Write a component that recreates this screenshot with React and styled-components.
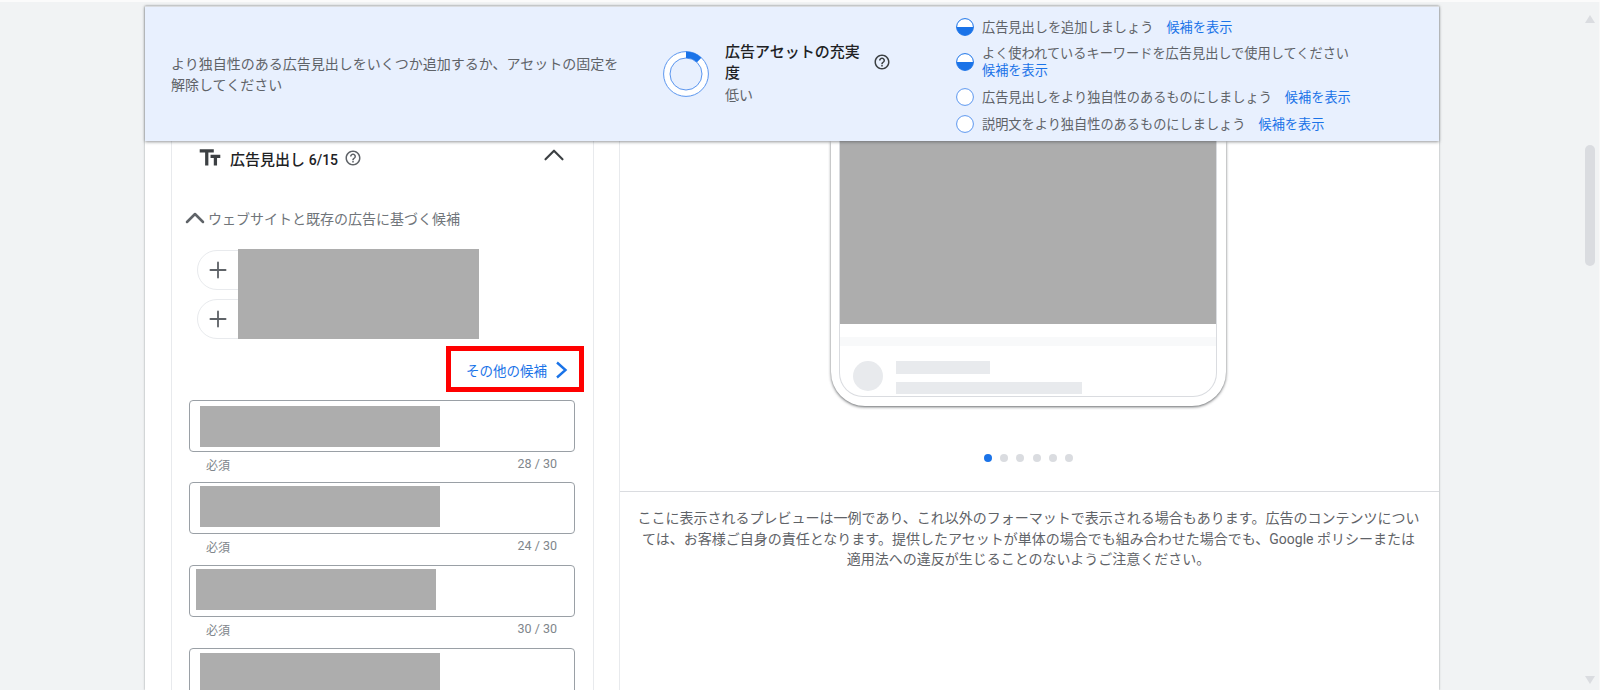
import React from "react";
import styled, { createGlobalStyle } from "styled-components";
import { Plus, ChevronUp } from "lucide-react";
import { MdTextFields, MdHelpOutline } from "react-icons/md";

const tips = [
  { id: 1, state: "half", text: "広告見出しを追加しましょう" },
  { id: 2, state: "half", text: "よく使われているキーワードを広告見出しで使用してください", wrap: true },
  { id: 3, state: "empty", text: "広告見出しをより独自性のあるものにしましょう" },
  { id: 4, state: "empty", text: "説明文をより独自性のあるものにしましょう" },
];

const fields = [
  { id: 1, count: "28 / 30", left: 10, lift: 0, height: 81.5 },
  { id: 2, count: "24 / 30", left: 10, lift: 2, height: 83.5 },
  { id: 3, count: "30 / 30", left: 6, lift: 4, height: 82.5 },
  { id: 4, left: 10, lift: 0, height: 82.5 },
];

const dots = [0, 1, 2, 3, 4, 5];

const Gauge = () => (
  <svg width="46" height="46" viewBox="0 0 46 46" style={{ flexShrink: 0 }}>
    <circle cx="23" cy="23" r="19.25" fill="none" stroke="#fff" strokeWidth="6" />
    <circle cx="23" cy="23" r="22.4" fill="none" stroke="#5c97ef" strokeWidth="1" />
    <circle cx="23" cy="23" r="16" fill="none" stroke="#5c97ef" strokeWidth="1" />
    <path d="M23 3.75 A19.25 19.25 0 0 1 36.2 9" fill="none" stroke="#1a73e8" strokeWidth="6.4" />
  </svg>
);

const TipIcon = ({ state }) => (
  <svg width="18" height="18" viewBox="0 0 18 18" style={{ flexShrink: 0 }}>
    <circle cx="9" cy="9" r="8.4" fill="#fff" stroke={state === "half" ? "#1a73e8" : "#5c97ef"} strokeWidth="1" />
    {state === "half" && <path d="M.6 9 a8.4 8.4 0 0 0 16.8 0z" fill="#1a73e8" />}
  </svg>
);

const App = () => {
  return (
    <Page>
      <GlobalStyle />
      <Main>
        <Card>
          <Banner>
            <BannerText>
              より独自性のある広告見出しをいくつか追加するか、アセットの固定を解除してください
            </BannerText>
            <Strength>
              <Gauge />
              <StrengthText>
                <StrengthTitle>広告アセットの充実度</StrengthTitle>
                <StrengthValue>低い</StrengthValue>
              </StrengthText>
              <BannerHelp>
                <MdHelpOutline size={18} />
              </BannerHelp>
            </Strength>
            <Tips>
              {tips.map((t) => (
                <Tip key={t.id}>
                  <TipIcon state={t.state} />
                  <TipBody $wrap={t.wrap}>
                    <span>{t.text}</span>
                    <LinkText>候補を表示</LinkText>
                  </TipBody>
                </Tip>
              ))}
            </Tips>
          </Banner>
          <Body>
            <LeftCol>
              <Panel>
                <PanelHead>
                  <MdTextFields size={26} color="#3c4043" />
                  <PanelTitle>
                    広告見出し <small>6/15</small>
                  </PanelTitle>
                  <MdHelpOutline size={18} color="#5f6368" />
                  <HeadChevron>
                    <ChevronUp size={34} strokeWidth={1.5} color="#3c4043" />
                  </HeadChevron>
                </PanelHead>
                <SuggestHead>
                  <ChevronUp size={32} strokeWidth={1.9} color="#5f6368" />
                  <span>ウェブサイトと既存の広告に基づく候補</span>
                </SuggestHead>
                <Chips>
                  <Chip>
                    <Plus size={26} strokeWidth={1.7} color="#5f6368" />
                  </Chip>
                  <Chip>
                    <Plus size={26} strokeWidth={1.7} color="#5f6368" />
                  </Chip>
                  <ChipMask />
                </Chips>
                <MoreBox>
                  <LinkText>その他の候補</LinkText>
                  <svg width="13" height="18" viewBox="0 0 13 18">
                    <path d="M2 1.5 L10.5 9 L2 16.5" fill="none" stroke="#1a73e8" strokeWidth="2.4" />
                  </svg>
                </MoreBox>
                {fields.map((f) => (
                  <Field key={f.id} $h={f.height}>
                    <FieldInput>
                      <Mask $left={f.left} $lift={f.lift} />
                    </FieldInput>
                    {f.count && (
                      <Helper>
                        <span>必須</span>
                        <Count>{f.count}</Count>
                      </Helper>
                    )}
                  </Field>
                ))}
              </Panel>
            </LeftCol>
            <RightCol>
              <Preview>
                <Phone>
                  <Screen>
                    <ScreenImage />
                    <ScreenBand />
                    <AdRow>
                      <Avatar />
                      <AdLines>
                        <AdLine $w={94} $h={13} />
                        <AdLine $w={186} $h={12} />
                      </AdLines>
                    </AdRow>
                  </Screen>
                </Phone>
                <Dots>
                  {dots.map((d) => (
                    <Dot key={d} $active={d === 0} />
                  ))}
                </Dots>
              </Preview>
              <Notice>
                ここに表示されるプレビューは一例であり、これ以外のフォーマットで表示される場合もあります。広告のコンテンツについ
                <br />
                ては、お客様ご自身の責任となります。提供したアセットが単体の場合でも組み合わせた場合でも、Google ポリシーまたは
                <br />
                適用法への違反が生じることのないようご注意ください。
              </Notice>
            </RightCol>
          </Body>
        </Card>
      </Main>
      <Rail>
        <ArrowUp />
        <Thumb />
        <ArrowDown />
      </Rail>
    </Page>
  );
};

export default App;

const GlobalStyle = createGlobalStyle`
  html, body {
    margin: 0;
    height: 690px;
    overflow: hidden;
    background: #f1f3f4;
  }
  * {
    box-sizing: border-box;
  }
`;

const Page = styled.div`
  display: flex;
  height: 690px;
  overflow: hidden;
  background: #f1f3f4;
  border-top: 2px solid #fbfbfb;
  font-family: Roboto, "Noto Sans CJK JP", sans-serif;
  color: #5f6368;
`;

const Main = styled.div`
  width: 1440px;
  padding: 4px 0 0 145px;
`;

const Card = styled.div`
  display: flex;
  flex-direction: column;
  width: 1294px;
  height: 684px;
  background: #fff;
  box-shadow: 0 0 2px rgba(60, 64, 67, 0.5);
`;

const Banner = styled.div`
  display: grid;
  grid-template-columns: 450px 303px 1fr;
  align-items: center;
  height: 135px;
  padding-left: 26px;
  background: #e8f0fe;
  border-top: 1px solid #dadce0;
  box-shadow: 0 1px 3px rgba(60, 64, 67, 0.55);
  position: relative;
  z-index: 1;
`;

const BannerText = styled.div`
  padding-top: 2px;
  font-size: 14px;
  line-height: 21px;
`;

const Strength = styled.div`
  display: flex;
  align-items: center;
  padding-left: 42px;
`;

const StrengthText = styled.div`
  width: 148px;
  margin-left: 16px;
`;

const StrengthTitle = styled.div`
  font-size: 15px;
  font-weight: 500;
  line-height: 21px;
  color: #202124;
`;

const StrengthValue = styled.div`
  font-size: 14px;
  line-height: 22px;
`;

const BannerHelp = styled.div`
  display: flex;
  margin: -24px 0 0 0;
  color: #3c4043;
`;

const Tips = styled.div`
  display: flex;
  flex-direction: column;
  gap: 9px;
  align-self: start;
  padding: 11px 0 0 32px;
`;

const Tip = styled.div`
  display: flex;
  align-items: center;
  gap: 8px;
`;

const TipBody = styled.div`
  display: flex;
  flex-direction: ${(p) => (p.$wrap ? "column" : "row")};
  gap: ${(p) => (p.$wrap ? "0" : "13px")};
  font-size: 13.2px;
  line-height: 17px;
`;

const LinkText = styled.span`
  color: #1a73e8;
`;

const Body = styled.div`
  flex: 1;
  display: grid;
  grid-template-columns: 474px 1fr;
  min-height: 0;
  overflow: hidden;
`;

const LeftCol = styled.div`
  padding-left: 26px;
`;

const Panel = styled.div`
  width: 423px;
  height: 100%;
  padding: 0 17px;
  border-left: 1.5px solid #e8eaed;
  border-right: 1.5px solid #e8eaed;
`;

const PanelHead = styled.div`
  display: flex;
  align-items: center;
  height: 34px;
  margin-left: 8px;
`;

const PanelTitle = styled.div`
  margin: 0 6px 0 7px;
  font-size: 15px;
  font-weight: 500;
  color: #202124;

  & > small {
    font-size: 14px;
  }
`;

const HeadChevron = styled.div`
  display: flex;
  margin-left: auto;
  margin-right: 5px;
  margin-top: -6px;
`;

const SuggestHead = styled.div`
  display: flex;
  align-items: center;
  height: 34px;
  margin: 26px 0 0 -10px;
  font-size: 14px;
  color: #70757a;

  & > svg {
    margin-right: -3px;
  }
`;

const Chips = styled.div`
  display: flex;
  flex-direction: column;
  gap: 9px;
  margin: 15px 0 0 8px;
  position: relative;
`;

const Chip = styled.div`
  display: flex;
  align-items: center;
  width: 282px;
  height: 40px;
  padding-left: 7px;
  border: 1px solid #e8eaed;
  border-radius: 20px;
`;

const ChipMask = styled.div`
  position: absolute;
  left: 41px;
  top: -1px;
  width: 241px;
  height: 90px;
  background: #adadad;
`;

const MoreBox = styled.div`
  display: flex;
  align-items: center;
  gap: 8px;
  width: 138px;
  height: 46px;
  margin: 7px -8px 8px auto;
  padding: 2px 0 0 15px;
  border: 5px solid #ff0000;
  font-size: 13.5px;
`;

const Field = styled.div`
  height: ${(p) => p.$h}px;
`;

const FieldInput = styled.div`
  display: flex;
  align-items: center;
  height: 52px;
  width: 386px;
  border: 1px solid #9aa0a6;
  border-radius: 4px;
`;

const Mask = styled.div`
  width: 240px;
  height: 41px;
  margin-left: ${(p) => p.$left}px;
  margin-bottom: ${(p) => p.$lift}px;
  background: #adadad;
`;

const Helper = styled.div`
  display: flex;
  justify-content: space-between;
  align-items: flex-start;
  width: 368px;
  padding: 3px 0 0 17px;
  font-size: 12px;
  line-height: 18px;
  color: #80868b;

  & > span:first-child {
    margin-top: 2px;
  }
`;

const Count = styled.span`
  font-size: 12.5px;
`;

const RightCol = styled.div`
  display: flex;
  flex-direction: column;
  border-left: 1.5px solid #e8eaed;
`;

const Preview = styled.div`
  height: 351px;
  padding-right: 2px;
  border-bottom: 1px solid #dadce0;
`;

const Phone = styled.div`
  width: 395px;
  height: 265px;
  margin: 0 auto;
  padding: 0 9px 9px 8px;
  background: #fff;
  border-radius: 0 0 34px 34px;
  box-shadow: 0 1px 3px rgba(60, 64, 67, 0.8);
`;

const Screen = styled.div`
  height: 100%;
  overflow: hidden;
  border: 1px solid #dadce0;
  border-top: none;
  border-radius: 0 0 24px 24px;
`;

const ScreenImage = styled.div`
  height: 183px;
  background: #adadad;
`;

const ScreenBand = styled.div`
  height: 9px;
  margin-top: 13px;
  background: #f8f9fa;
`;

const AdRow = styled.div`
  display: flex;
  gap: 13px;
  padding: 15px 0 0 13px;
`;

const Avatar = styled.div`
  width: 30px;
  height: 30px;
  border-radius: 50%;
  background: #e8eaed;
`;

const AdLines = styled.div`
  display: flex;
  flex-direction: column;
  gap: 8px;
`;

const AdLine = styled.div`
  width: ${(p) => p.$w}px;
  height: ${(p) => p.$h}px;
  background: #e8eaed;
`;

const Dots = styled.div`
  display: flex;
  justify-content: center;
  gap: 8.4px;
  margin-top: 48px;
`;

const Dot = styled.div`
  width: 8px;
  height: 8px;
  border-radius: 50%;
  background: ${(p) => (p.$active ? "#1a73e8" : "#dadce0")};
`;

const Notice = styled.div`
  padding: 16px 2px 0 0;
  font-size: 14px;
  line-height: 20.5px;
  text-align: center;
`;

const Rail = styled.div`
  display: flex;
  flex-direction: column;
  align-items: center;
  width: 16px;
  margin-left: auto;
  padding: 13px 3px 6px 0;
  border-right: 1px solid #f8f8f8;
`;

const ArrowUp = styled.div`
  width: 0;
  height: 0;
  border-left: 5px solid transparent;
  border-right: 5px solid transparent;
  border-bottom: 8px solid #dadce0;
`;

const Thumb = styled.div`
  width: 10px;
  height: 121px;
  margin-top: 122px;
  border-radius: 5px;
  background: #dadce0;
`;

const ArrowDown = styled.div`
  width: 0;
  height: 0;
  margin-top: auto;
  border-left: 5px solid transparent;
  border-right: 5px solid transparent;
  border-top: 8px solid #dadce0;
`;
